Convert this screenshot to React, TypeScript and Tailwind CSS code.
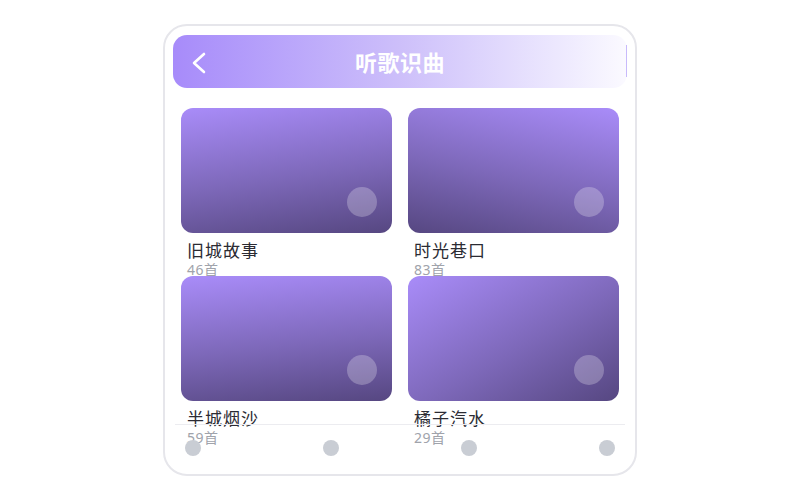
import React from 'react';

interface ISong {
  title: string;
  count: number;
  gradient: string;
}

const songs: ISong[] = [
  { title: '旧城故事', count: 46, gradient: 'bg-[linear-gradient(172deg,#a98cf9_0%,#7d68b9_55%,#564781_100%)]' },
  { title: '时光巷口', count: 83, gradient: 'bg-[linear-gradient(192deg,#a98cf9_0%,#7d68b9_55%,#564781_100%)]' },
  { title: '半城烟沙', count: 59, gradient: 'bg-[linear-gradient(174deg,#a98cf9_0%,#7d68b9_55%,#564781_100%)]' },
  { title: '橘子汽水', count: 29, gradient: 'bg-[linear-gradient(150deg,#a98cf9_0%,#7d68b9_55%,#564781_100%)]' },
];

function SongCard({ song }: { song: ISong }) {
  return (
    <div className="flex flex-col h-[168px]">
      <div className={`relative shrink-0 h-[125px] rounded-[12px] ${song.gradient}`}>
        <div className="absolute right-[15px] bottom-[16px] w-[30px] h-[30px] rounded-full bg-white/25" />
      </div>
      <div className="mt-2 px-1.5 shrink-0">
        <p className="text-[17px] leading-5 tracking-[1px] text-[#2b2b33]">{song.title}</p>
        <p className="text-sm leading-[18px] tracking-[0.5px] text-[#a0a3ab]">{song.count}首</p>
      </div>
    </div>
  );
}

export default function App() {
  return (
    <div
      className="w-[800px] h-[500px] bg-white flex items-center justify-center"
      style={{ fontFamily: '"Noto Sans", "Noto Sans CJK SC", sans-serif' }}
    >
      <div className="relative w-[474px] h-[452px] rounded-[24px] border-2 border-[#e6e6eb] bg-white px-2 pt-[9px] overflow-hidden">
        <header className="relative h-[53px] rounded-[14px] bg-gradient-to-r from-[#a78bfa] via-[#cdbffa] to-[#fbfaff] flex items-center justify-center">
          <svg className="absolute left-[19px] top-[17px]" width="14" height="22" viewBox="0 0 14 22" fill="none">
            <path d="M12 2 L2 11 L12 20" stroke="white" strokeWidth="2.6" strokeLinecap="round" strokeLinejoin="round" />
          </svg>
          <h1 className="text-[22px] font-bold text-white leading-none tracking-[0.5px]">听歌识曲</h1>
          <div className="absolute right-0 top-[10px] w-px h-8 bg-[#c8bafb]" />
        </header>

        <div className="grid grid-cols-2 gap-x-4 px-2 mt-5">
          {songs.map((s) => (
            <SongCard key={s.title} song={s} />
          ))}
        </div>

        <nav className="absolute left-[10px] right-[10px] bottom-0 h-[50px] border-t border-[#ececf0] px-[10px] pt-[15px] flex justify-between">
          {[0, 1, 2, 3].map((i) => (
            <span key={i} className="block w-4 h-4 rounded-full bg-[#c9cdd4]" />
          ))}
        </nav>
      </div>
    </div>
  );
}
